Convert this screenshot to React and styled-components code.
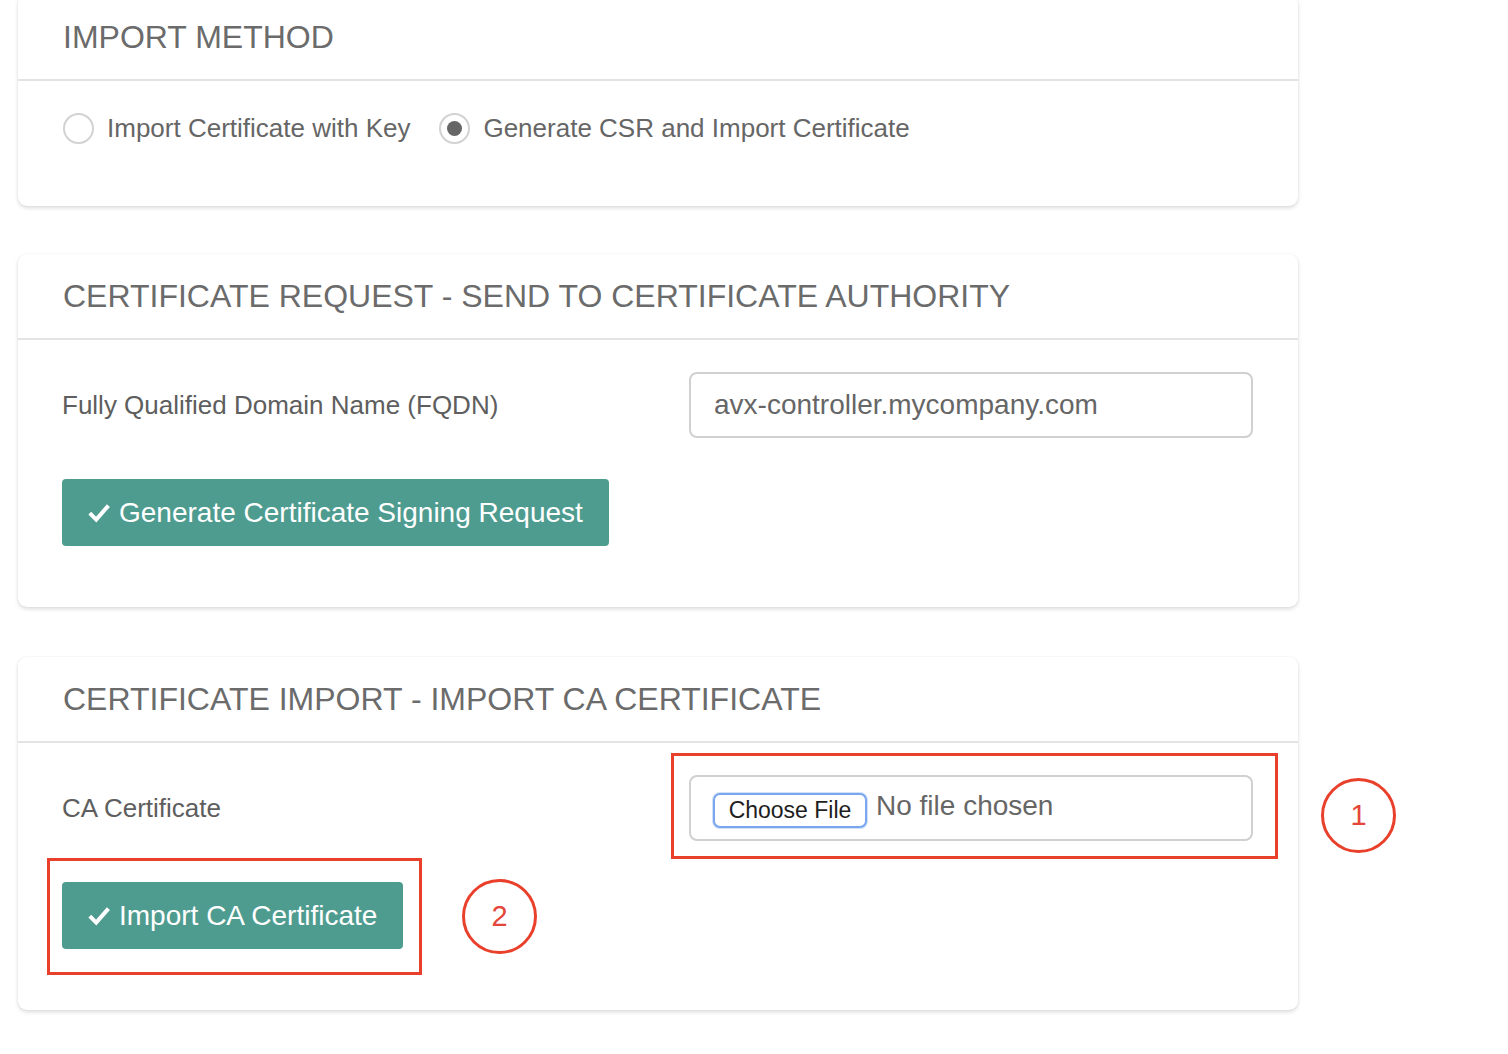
import React from 'react'
import styled, { createGlobalStyle } from 'styled-components'

const GlobalStyle = createGlobalStyle`
  html, body {
    margin: 0;
    padding: 0;
    background: #fff;
    font-family: "Liberation Sans", Arial, sans-serif;
  }
  * {
    box-sizing: border-box;
  }
`

const CheckIcon = () => (
  <svg width="22" height="20" viewBox="0 0 22 20" fill="none">
    <polyline points="1.8,10.2 8.2,16.6 20.4,2.6" stroke="#fff" strokeWidth="4" />
  </svg>
)

const App = () => (
  <Page>
    <GlobalStyle />

    <Card>
      <CardHeader>IMPORT METHOD</CardHeader>
      <CardBody $bottom={62}>
        <RadioGroup>
          <RadioOption>
            <Radio />
            Import Certificate with Key
          </RadioOption>
          <RadioOption>
            <Radio $checked />
            Generate CSR and Import Certificate
          </RadioOption>
        </RadioGroup>
      </CardBody>
    </Card>

    <Card $offset={-1}>
      <CardHeader>CERTIFICATE REQUEST - SEND TO CERTIFICATE AUTHORITY</CardHeader>
      <CardBody>
        <FormRow>
          <FieldLabel>Fully Qualified Domain Name (FQDN)</FieldLabel>
          <TextInput readOnly value="avx-controller.mycompany.com" />
        </FormRow>
        <ActionButton>
          <CheckIcon />
          Generate Certificate Signing Request
        </ActionButton>
      </CardBody>
    </Card>

    <Card $offset={1}>
      <CardHeader>CERTIFICATE IMPORT - IMPORT CA CERTIFICATE</CardHeader>
      <CardBody>
        <FormRow>
          <FieldLabel>CA Certificate</FieldLabel>
          <FileBox>
            <ChooseButton>Choose File</ChooseButton>
            <FileName>No file chosen</FileName>
          </FileBox>
        </FormRow>
        <ActionButton>
          <CheckIcon />
          Import CA Certificate
        </ActionButton>
      </CardBody>

      <Highlight $left={653} $top={96} $width={607} $height={106} />
      <StepMarker $left={1303} $top={121}>1</StepMarker>
      <Highlight $left={29} $top={201} $width={375} $height={117} />
      <StepMarker $left={444} $top={222}>2</StepMarker>
    </Card>
  </Page>
)

export default App

const Page = styled.div`
  display: flex;
  flex-direction: column;
  gap: 49px;
  width: 1280px;
  margin: -5px 0 0 18px;
  padding-bottom: 40px;
`

const Card = styled.section`
  position: relative;
  margin-top: ${(p) => p.$offset || 0}px;
  background: #fff;
  border-radius: 9px;
  box-shadow: 0 2px 4px rgba(0, 0, 0, 0.14), 0 0 2px rgba(0, 0, 0, 0.06);
`

const CardHeader = styled.h2`
  display: flex;
  align-items: center;
  height: 86px;
  margin: 0;
  padding: 0 45px;
  border-bottom: 2px solid #e3e3e3;
  font-size: 32px;
  font-weight: 400;
  color: #6b6b6b;
  white-space: nowrap;
`

const CardBody = styled.div`
  padding: 32px 45px ${(p) => p.$bottom || 61}px 44px;
`

const RadioGroup = styled.div`
  display: flex;
  align-items: center;
  gap: 28px;
  height: 31px;
`

const RadioOption = styled.label`
  display: flex;
  align-items: center;
  gap: 13px;
  font-size: 26px;
  color: #666;
`

const Radio = styled.span`
  display: flex;
  align-items: center;
  justify-content: center;
  width: 31px;
  height: 31px;
  margin-left: 1px;
  border: 2px solid #d2d2d2;
  border-radius: 50%;
  background: #fff;

  &::after {
    content: '';
    display: ${(p) => (p.$checked ? 'block' : 'none')};
    width: 15px;
    height: 15px;
    border-radius: 50%;
    background: #666;
  }
`

const FormRow = styled.div`
  display: grid;
  grid-template-columns: 627px 564px;
  align-items: center;
`

const FieldLabel = styled.label`
  font-size: 26px;
  color: #5e5e5e;
`

const TextInput = styled.input`
  width: 100%;
  height: 66px;
  padding: 0 23px;
  border: 2px solid #d0d0d0;
  border-radius: 8px;
  font-family: inherit;
  font-size: 28px;
  color: #666;
  outline: none;
`

const FileBox = styled.div`
  display: flex;
  align-items: center;
  gap: 9px;
  height: 66px;
  padding: 0 22px 4px;
  border: 2px solid #d0d0d0;
  border-radius: 8px;
`

const ChooseButton = styled.button`
  height: 35px;
  width: 154px;
  margin-top: 8px;
  padding: 1px 0 0;
  border: 2px solid #79a6ef;
  border-radius: 7px;
  box-shadow: 0 0 0 1px rgba(121, 166, 239, 0.35);
  background: #fff;
  font-family: inherit;
  font-size: 23px;
  color: #1e1e1e;
`

const FileName = styled.span`
  font-size: 28px;
  color: #666;
`

const ActionButton = styled.button`
  display: inline-flex;
  align-items: center;
  gap: 9px;
  height: 67px;
  margin-top: 41px;
  padding: 0 26px;
  border: none;
  border-radius: 4px;
  background: #4e9c90;
  font-family: inherit;
  font-size: 28px;
  color: #fff;
`

const Highlight = styled.div`
  position: absolute;
  left: ${(p) => p.$left}px;
  top: ${(p) => p.$top}px;
  width: ${(p) => p.$width}px;
  height: ${(p) => p.$height}px;
  border: 3px solid #e8402b;
  pointer-events: none;
`

const StepMarker = styled.div`
  position: absolute;
  left: ${(p) => p.$left}px;
  top: ${(p) => p.$top}px;
  display: flex;
  align-items: center;
  justify-content: center;
  width: 75px;
  height: 75px;
  border: 3px solid #e8402b;
  border-radius: 50%;
  font-size: 29px;
  color: #e5463a;
`
